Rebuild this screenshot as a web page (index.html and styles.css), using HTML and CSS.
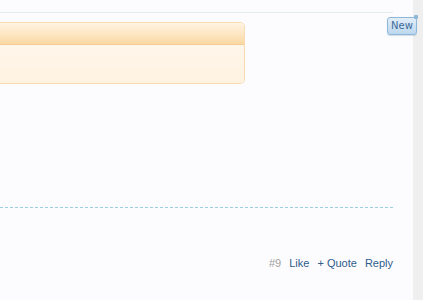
FILE: index.html
```html
<!DOCTYPE html>
<html>
<head>
<meta charset="utf-8">
<link rel="stylesheet" href="styles.css">
</head>
<body>
<div class="page">
  <div class="content">
    <div class="message">
      <span class="badge">New</span>
      <div class="notice">
        <div class="notice-head"></div>
        <div class="notice-body"></div>
      </div>
      <div class="spacer"></div>
      <div class="divider"></div>
      <div class="footer">
        <span class="postnum">#9</span>
        <a class="action">Like</a>
        <a class="action">+ Quote</a>
        <a class="action">Reply</a>
      </div>
    </div>
  </div>
  <div class="strip"></div>
</div>
</body>
</html>
```

FILE: styles.css
```css
html, body {
  margin: 0;
  padding: 0;
  background: #fcfcfe;
  font-family: "Liberation Sans", Arial, sans-serif;
}
.page {
  display: flex;
  height: 300px;
  overflow: hidden;
}
.content {
  flex: 1;
  padding-top: 12px;
}
.strip {
  width: 10px;
  background: #efefef;
}
.message {
  position: relative;
  width: 393px;
  border-top: 1px solid #e3eef3;
}
.badge {
  position: absolute;
  top: 4px;
  left: 387px;
  width: 30px;
  height: 18px;
  box-sizing: border-box;
  border: 1px solid #8fb7da;
  border-radius: 3px;
  background: linear-gradient(#e2eef9, #bcd7ee);
  color: #3d6c99;
  font-family: "DejaVu Sans", sans-serif;
  font-size: 10px;
  line-height: 16px;
  text-align: center;
  box-shadow: 0 1px 1px rgba(80,120,160,0.25);
}
.badge::after {
  content: "";
  position: absolute;
  top: -3px;
  right: -2px;
  width: 4px;
  height: 4px;
  background: #8fb7da;
  border-radius: 1px;
}
.notice {
  margin-top: 9px;
  width: 245px;
  height: 62px;
  box-sizing: border-box;
  border: 1px solid #f6dcb0;
  border-left: none;
  border-radius: 0 5px 5px 0;
  background: #fff5e7;
  overflow: hidden;
}
.notice-head {
  height: 21px;
  background: linear-gradient(#fff3e2 0%, #fde8c8 45%, #fbd8a3 100%);
  border-bottom: 1px solid #f4cc8f;
}
.notice-body {
  height: 38px;
  background: linear-gradient(#fff6ea, #fff2e1);
}
.spacer {
  height: 123px;
}
.divider {
  border-top: 1px dashed #9ccde0;
}
.footer {
  display: flex;
  justify-content: flex-end;
  align-items: center;
  gap: 8px;
  margin-top: 48px;
  font-size: 11px;
  line-height: 14px;
}
.postnum {
  color: #a0a0a0;
}
.action {
  color: #2f5d8c;
  text-decoration: none;
}
```
